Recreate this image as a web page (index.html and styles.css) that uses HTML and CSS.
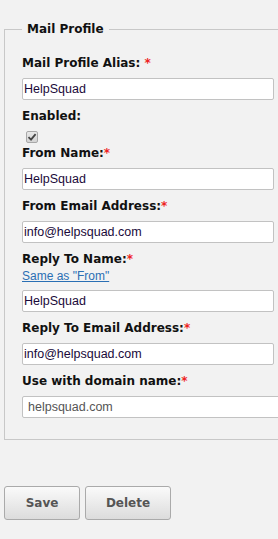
FILE: index.html
```html
<!DOCTYPE html>
<html>
	<head>
		<meta charset="utf-8">
		<title>Mail Profile</title>
		<link rel="stylesheet" href="styles.css">
	</head>
	<body>
		<div class="page">
			<fieldset class="profile">
				<legend>Mail Profile</legend>
				<div class="field first">
					<label>Mail Profile Alias: <span class="req">*</span></label>
					<input type="text" class="txt" value="HelpSquad">
				</div>
				<div class="field">
					<label class="lbl-enabled">Enabled:</label>
					<!--只读的勾选框-->
					<span class="chk">
						<svg width="10" height="10" viewBox="0 0 10 10"><path d="M1.5 5.2 L4 7.6 L8.6 2.2" fill="none" stroke="#444" stroke-width="1.8"/></svg>
					</span>
				</div>
				<div class="field">
					<label>From Name:<span class="req">*</span></label>
					<input type="text" class="txt" value="HelpSquad">
				</div>
				<div class="field">
					<label>From Email Address:<span class="req">*</span></label>
					<input type="text" class="txt" value="info@helpsquad.com">
				</div>
				<div class="field">
					<label>Reply To Name:<span class="req">*</span></label>
					<a href="javascript:;" class="same">Same as "From"</a>
					<input type="text" class="txt" value="HelpSquad">
				</div>
				<div class="field">
					<label>Reply To Email Address:<span class="req">*</span></label>
					<input type="text" class="txt" value="info@helpsquad.com">
				</div>
				<div class="field">
					<label>Use with domain name:<span class="req">*</span></label>
					<input type="text" class="txt wide" value="helpsquad.com">
				</div>
			</fieldset>
			<div class="buttons">
				<button class="btn btn-save">Save</button>
				<button class="btn btn-del">Delete</button>
			</div>
		</div>
	</body>
</html>
```
FILE: styles.css
```css
*{
	margin: 0px;
	padding: 0px;
	box-sizing: border-box;
}
html, body{
	background-color: #f2f2f2;
	overflow: hidden;
}
body{
	font-family: "DejaVu Sans", Verdana, sans-serif;
	font-size: 12px;
	color: #111;
}
.page{
	padding: 21px 0 0 4px;
	width: 300px;
}
.profile{
	border: 1px solid #c8c8c8;
	border-right: none;
	padding: 6px 0 21px 17px;
	width: 296px;
}
.profile legend{
	font-weight: bold;
	padding: 0 5px;
	margin-left: 0;
	font-size: 12px;
	line-height: 16px;
}
.field{
	display: flex;
	flex-direction: column;
	align-items: flex-start;
}
.field.first{
	margin-top: 4px;
}
.field label{
	font-weight: bold;
	line-height: 16px;
	margin: 8px 0 7px 0;
}
.req{
	color: #ee2222;
}
.txt{
	width: 252px;
	height: 22px;
	border: 1px solid #c2c2c2;
	border-radius: 2px;
	background-color: #fff;
	font-family: "Liberation Sans", Arial, sans-serif;
	font-size: 12.5px;
	color: #1a0a3a;
	padding: 0 1px;
}
.txt.wide{
	width: 280px;
	padding: 0 5px;
	color: #555;
}
.lbl-enabled{
	margin-bottom: 7px !important;
}
.chk{
	display: flex;
	align-items: center;
	justify-content: center;
	width: 12px;
	height: 12px;
	margin: 0 0 -6px 4px;
	border: 1px solid #a8a8a8;
	border-radius: 2px;
	background: linear-gradient(#e8e8e8, #d4d4d4);
}
.same{
	display: block;
	font-family: "Liberation Sans", Arial, sans-serif;
	font-size: 12px;
	line-height: 14px;
	color: #2a6fb4;
	margin: -5px 0 7px 0;
}
.buttons{
	display: flex;
	gap: 5px;
	margin-top: 46px;
}
.btn{
	height: 34px;
	border: 1px solid #aaa;
	border-radius: 3px;
	background: linear-gradient(#fafafa, #dcdcdc);
	font-family: "DejaVu Sans", Verdana, sans-serif;
	font-weight: bold;
	font-size: 12px;
	color: #555;
}
.btn-save{
	width: 76px;
}
.btn-del{
	width: 86px;
}
```
